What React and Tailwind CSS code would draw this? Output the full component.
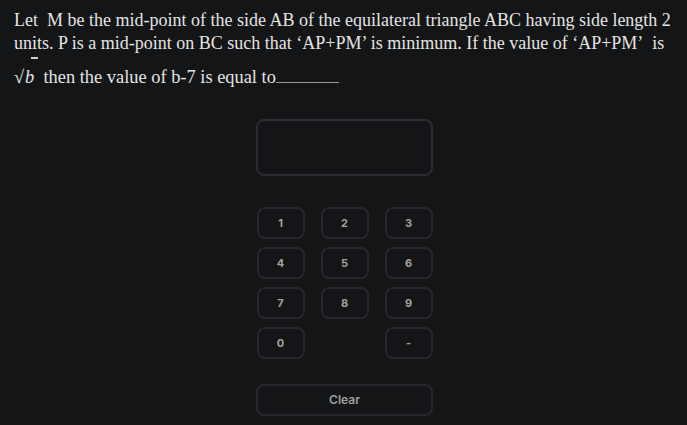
import { useState } from "react";

const keys = ["1", "2", "3", "4", "5", "6", "7", "8", "9", "0", "", "-"];

export default function App() {
  const [value, setValue] = useState("");

  const press = (k) => setValue((v) => v + k);

  return (
    <div className="w-[687px] h-[425px] bg-[#141517] overflow-hidden">
      {/* question */}
      <div
        className="pl-[14px] pr-3 pt-[9px] text-[18px] leading-[23px] text-[#e4e4e4]"
        style={{ fontFamily: '"Liberation Serif", serif' }}
      >
        <p>
          Let&nbsp; M be the mid-point of the side AB of the equilateral triangle ABC having side length 2
        </p>
        <p>
          units. P is a mid-point on BC such that ‘AP+PM’ is minimum. If the value of ‘AP+PM’&nbsp; is
        </p>
        <p className="mt-[11px] text-[18.4px]">
          <span className="relative">
            √<i className="pl-[1px]">b</i>
            <span className="absolute left-[17px] top-[-10px] w-[7px] h-[2px] bg-[#cfcfcf]" />
          </span>
          &nbsp; then the value of b-7 is equal to
          <span className="inline-block w-[63px] border-b border-[#9a9a9a] align-baseline" />
        </p>
      </div>

      {/* answer area */}
      <div
        className="flex flex-col items-center ml-[2px]"
        style={{ fontFamily: "Inter, sans-serif" }}
      >
        <div className="mt-[30px] w-[177px] h-[57px] rounded-[8px] border-2 border-[#2b2d31] flex items-center justify-center text-[#b0b0b0] text-sm font-semibold">
          {value}
        </div>

        <div className="mt-[31px] grid grid-cols-[48px_48px_48px] gap-x-[16px] gap-y-[8px]">
          {keys.map((k, i) =>
            k === "" ? (
              <div key={i} />
            ) : (
              <button
                key={i}
                onClick={() => press(k)}
                className="h-[32px] rounded-[8px] border-2 border-[#26282c] text-[11px] font-bold text-[#a3a3a3] flex items-center justify-center"
              >
                {k}
              </button>
            )
          )}
        </div>

        <button
          onClick={() => setValue("")}
          className="mt-[25px] w-[177px] h-[32px] rounded-[8px] border-2 border-[#26282c] text-[12px] font-semibold text-[#9e9e9e]"
        >
          Clear
        </button>
      </div>
    </div>
  );
}
